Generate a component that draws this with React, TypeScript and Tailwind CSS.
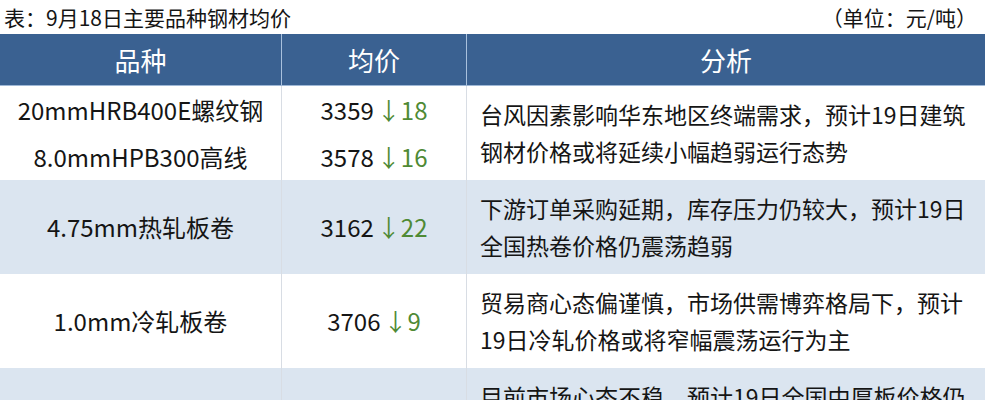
const font = { fontFamily: '"Noto Sans CJK SC", "Noto Sans", sans-serif' }

type Row = {
  items: { name: string; price: string; change: string }[]
  analysis: string[]
  striped: boolean
}

const rows: Row[] = [
  {
    items: [
      { name: '20mmHRB400E螺纹钢', price: '3359', change: '↓18' },
      { name: '8.0mmHPB300高线', price: '3578', change: '↓16' },
    ],
    analysis: ['台风因素影响华东地区终端需求，预计19日建筑', '钢材价格或将延续小幅趋弱运行态势'],
    striped: false,
  },
  {
    items: [{ name: '4.75mm热轧板卷', price: '3162', change: '↓22' }],
    analysis: ['下游订单采购延期，库存压力仍较大，预计19日', '全国热卷价格仍震荡趋弱'],
    striped: true,
  },
  {
    items: [{ name: '1.0mm冷轧板卷', price: '3706', change: '↓9' }],
    analysis: ['贸易商心态偏谨慎，市场供需博弈格局下，预计', '19日冷轧价格或将窄幅震荡运行为主'],
    striped: false,
  },
  {
    // 下一行只露出分析的第一行
    items: [],
    analysis: ['目前市场心态不稳，预计19日全国中厚板价格仍', '将延续弱势震荡运行'],
    striped: true,
  },
]

export default function App() {
  return (
    <div className="w-[989px] h-[400px] overflow-hidden bg-white text-[#151515]" style={font}>
      {/* 标题 */}
      <div className="h-[34px] flex items-center justify-between pl-[4px] pr-[12px] text-[21px] leading-none">
        <span>表：9月18日主要品种钢材均价</span>
        <span>（单位：元/吨）</span>
      </div>

      <div className="w-[985px]">
        {/* 表头 */}
        <div className="grid grid-cols-[282px_185px_1fr] h-[52px] bg-[#3a6191] text-white text-[26px] border-b border-[#9fb8d6]">
          <div className="flex items-center justify-center border-r border-[#a9c1dd]">品种</div>
          <div className="flex items-center justify-center border-r border-[#a9c1dd]">均价</div>
          <div className="flex items-center justify-center">分析</div>
        </div>

        {rows.map((row, i) => (
          <div
            key={i}
            className={
              'grid grid-cols-[282px_185px_1fr] h-[94px] ' +
              (row.striped ? 'bg-[#dbe5f0]' : 'bg-white')
            }
          >
            <div className="flex flex-col border-r border-[#d8dde4] text-[24px]">
              {row.items.map((it) => (
                <div key={it.name} className="flex-1 flex items-center justify-center whitespace-nowrap">
                  {it.name}
                </div>
              ))}
            </div>
            <div className="flex flex-col border-r border-[#d8dde4] text-[24px]">
              {row.items.map((it) => (
                <div key={it.name} className="flex-1 flex items-center justify-center whitespace-nowrap">
                  <span>{it.price}</span>
                  <span className="ml-[3px] text-[#4f8a35]">{it.change}</span>
                </div>
              ))}
            </div>
            <div className="flex flex-col justify-center pl-[13px] text-[23px] leading-[37px]">
              {row.analysis.map((line) => (
                <div key={line} className="whitespace-nowrap">{line}</div>
              ))}
            </div>
          </div>
        ))}
      </div>
    </div>
  )
}
